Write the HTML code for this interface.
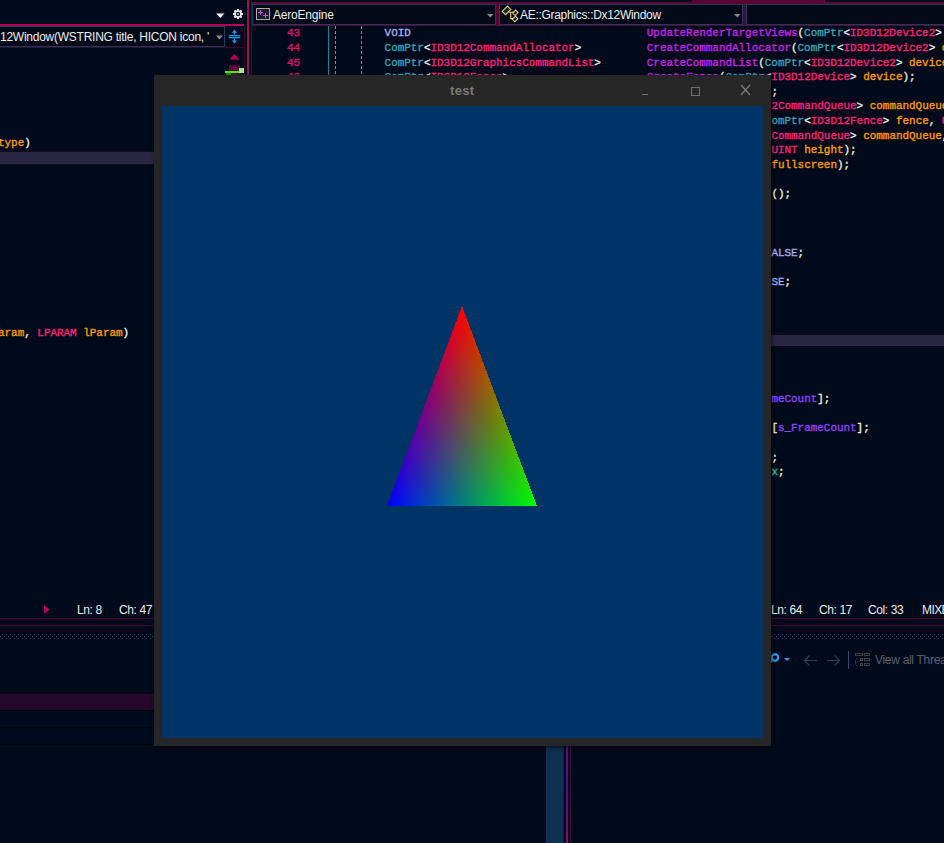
<!DOCTYPE html>
<html><head><meta charset="utf-8">
<style>
html,body{margin:0;padding:0;}
body{width:944px;height:843px;overflow:hidden;position:relative;background:#010a1b;font-family:"Liberation Sans",sans-serif;}
.a{position:absolute;}
.code{position:absolute;font-family:"Liberation Mono",monospace;font-size:10.93px;-webkit-text-stroke:0.35px currentColor;line-height:14.63px;height:14.63px;white-space:pre;color:#f2ecd6;}
.ui{position:absolute;font-family:"Liberation Sans",sans-serif;font-size:12px;white-space:pre;color:#ececec;line-height:14px;}
.fn{color:#c81ee6}.ty{color:#ff1f72}.cp{color:#3aa0b4}.pm{color:#ff9a00}.br{color:#e8f0f4}.kw{color:#aaaaf0}.mb{color:#9240fa}.gr{color:#20c8a0}.pu{color:#f2ecd6}
</style></head><body>

<!-- ===== LEFT PANE ===== -->
<!-- top toolbar icons -->
<svg class="a" style="left:216px;top:13px" width="9" height="6"><path d="M0 0.5H8.5L4.25 5Z" fill="#f0f0f0"/></svg>
<svg class="a" style="left:232px;top:8px" width="12" height="12" viewBox="0 0 12 12"><g fill="#f2f2f2"><circle cx="6" cy="6" r="3.8"/><rect x="5" y="1" width="2" height="10"/><rect x="1" y="5" width="10" height="2"/><rect x="5" y="1" width="2" height="10" transform="rotate(45 6 6)"/><rect x="5" y="1" width="2" height="10" transform="rotate(-45 6 6)"/></g><circle cx="6" cy="6" r="2.2" fill="#010a1b"/><circle cx="6" cy="6" r="0.9" fill="#f2f2f2"/></svg>
<!-- nav bar -->
<div class="a" style="left:0;top:24px;width:244px;height:2px;background:#b4005a"></div>
<div class="a" style="left:0;top:26px;width:224px;height:19px;border:1px solid #1b3d62;border-left:none;background:#020a18"></div>
<div class="ui" style="left:0px;top:30px;letter-spacing:-0.25px">12Window(WSTRING title, HICON icon, '</div>
<svg class="a" style="left:216px;top:35px" width="8" height="5"><path d="M0 0.5H7L3.5 4.5Z" fill="#8a8a8a"/></svg>
<div class="a" style="left:0;top:47px;width:244px;height:1px;background:#3a0a2a"></div>
<div class="a" style="left:244px;top:26px;width:1px;height:600px;background:#3a0a2a"></div>
<svg class="a" style="left:226px;top:27px" width="18" height="20" viewBox="0 0 18 20"><g stroke="#1e9cf0" stroke-width="1.2" fill="none"><path d="M2.8 8.6H14.2M2.8 10.6H14.2M8.5 5V7.6M8.5 11.6V14"/></g><path d="M5.8 5.8L8.5 2.8L11.2 5.8ZM5.8 13.4L8.5 16.4L11.2 13.4Z" fill="#1e9cf0"/></svg>
<!-- scrollbar bits -->
<svg class="a" style="left:229px;top:53px" width="11" height="7"><path d="M0.5 6.5L5.5 0.8L10.5 6.5Z" fill="#b0005e"/></svg>
<div class="a" style="left:229px;top:65px;width:11px;height:10px;background:#5a0a38"></div>
<div class="a" style="left:225px;top:71px;width:19px;height:2px;background:#44ee10"></div>
<div class="a" style="left:239px;top:68px;width:5px;height:5px;background:#a8e890"></div>
<div class="a" style="left:226px;top:73px;width:5px;height:2px;background:#1a8a10"></div>

<!-- left code -->
<div class="code" style="left:-2px;top:135.5px"><span class="pm">type</span><span class="br">)</span></div>
<div class="a" style="left:0;top:151px;width:244px;height:13px;background:#282744;border-top:1px solid #0c0c1c;border-bottom:1px solid #0c0c1c;box-sizing:border-box;height:14px"></div>
<div class="code" style="left:-2px;top:325.7px"><span class="pm">aram</span><span class="pu">, </span><span class="ty">LPARAM</span> <span class="pm">lParam</span><span class="br">)</span></div>

<!-- left status bar -->
<svg class="a" style="left:44px;top:605px" width="6" height="9"><path d="M0 0L5.5 4.5L0 9Z" fill="#c0005e"/></svg>
<div class="ui" style="left:77px;top:603px;letter-spacing:-0.4px">Ln: 8</div>
<div class="ui" style="left:119px;top:603px;letter-spacing:-0.4px">Ch: 47</div>
<div class="a" style="left:0;top:618px;width:244px;height:1px;background:#3a0830"></div>
<div class="a" style="left:0;top:625px;width:546px;height:1px;background:#3a0830"></div>

<!-- splitter -->
<div class="a" style="left:247px;top:0;width:2px;height:626px;background:#9a1048"></div>

<!-- ===== RIGHT PANE ===== -->
<div class="a" style="left:692px;top:0;width:133px;height:2px;background:#5a0532"></div>
<div class="a" style="left:251px;top:2px;width:693px;height:24px;background:#5a0532"></div>
<div class="a" style="left:251px;top:2px;width:1px;height:624px;background:#4a0a30"></div>
<div class="a" style="left:252px;top:4px;width:242px;height:19px;border:1px solid #1b3d62;background:#020a18"></div>
<div class="a" style="left:499px;top:4px;width:242px;height:19px;border:1px solid #1b3d62;background:#020a18"></div>
<div class="a" style="left:746px;top:4px;width:260px;height:19px;border:1px solid #1b3d62;background:#020a18"></div>
<!-- project icon -->
<svg class="a" style="left:256px;top:8px" width="14" height="12" viewBox="0 0 14 12"><rect x="0.5" y="0.5" width="13" height="11" fill="#161c28" stroke="#a8a8a8"/><g stroke="#d050e0" stroke-width="1" shape-rendering="crispEdges"><path d="M2 4.5H7M4.5 2V7M7 7.5H12M9.5 5V10"/></g></svg>
<div class="ui" style="left:273px;top:8px;letter-spacing:-0.2px">AeroEngine</div>
<svg class="a" style="left:487px;top:14px" width="7" height="4"><path d="M0 0H6.5L3.25 3.5Z" fill="#8a8a8a"/></svg>
<!-- class icon -->
<svg class="a" style="left:498px;top:3px" width="24" height="22" viewBox="0 0 24 22"><g fill="#22221e" stroke="#ecd080" stroke-width="1.05" stroke-linejoin="miter"><polygon points="9.5,3.1 12.8,6.4 7.6,11.7 4.2,8.5"/><polygon points="17.6,7.1 20.1,9.6 17.2,12.6 14.7,10.1"/><polygon points="17.3,13.2 19.9,15.7 16.9,18.8 14.3,16.3"/></g><path d="M10.6 9.3H15.3M12.7 9.3V15.6H15" stroke="#ecd080" stroke-width="1.1" fill="none"/></svg>
<div class="ui" style="left:520px;top:8px;letter-spacing:-0.3px">AE::Graphics::Dx12Window</div>
<svg class="a" style="left:734px;top:14px" width="7" height="4"><path d="M0 0H6.5L3.25 3.5Z" fill="#8a8a8a"/></svg>

<!-- margins -->
<div class="a" style="left:328px;top:26px;width:1px;height:600px;background:#108890"></div>
<div class="a" style="left:335px;top:26px;width:1px;height:600px;background:repeating-linear-gradient(#18b8c8 0 3px,transparent 3px 5px)"></div>
<div class="a" style="left:361px;top:26px;width:1px;height:600px;background:repeating-linear-gradient(#18b8c8 0 3px,transparent 3px 5px)"></div>

<!-- line numbers -->
<div class="code" style="left:287px;top:26.2px;color:#e0106a">43</div>
<div class="code" style="left:287px;top:40.8px;color:#e0106a">44</div>
<div class="code" style="left:287px;top:55.5px;color:#e0106a">45</div>
<div class="code" style="left:287px;top:70.1px;color:#e0106a">46</div>

<!-- right code: col0 = 384.6 -->
<div class="code" style="left:384.6px;top:26.2px"><span class="kw">VOID</span></div>
<div class="code" style="left:384.6px;top:40.8px"><span class="cp">ComPtr</span><span class="br">&lt;</span><span class="ty">ID3D12CommandAllocator</span><span class="br">&gt;</span></div>
<div class="code" style="left:384.6px;top:55.5px"><span class="cp">ComPtr</span><span class="br">&lt;</span><span class="ty">ID3D12GraphicsCommandList</span><span class="br">&gt;</span></div>
<div class="code" style="left:384.6px;top:70.1px"><span class="cp">ComPtr</span><span class="br">&lt;</span><span class="ty">ID3D12Fence</span><span class="br">&gt;</span></div>

<div class="code" style="left:646.8px;top:26.2px"><span class="fn">UpdateRenderTargetViews</span><span class="pu">(</span><span class="cp">ComPtr</span><span class="br">&lt;</span><span class="ty">ID3D12Device2</span><span class="br">&gt;</span> <span class="pm">device</span></div>
<div class="code" style="left:646.8px;top:40.8px"><span class="fn">CreateCommandAllocator</span><span class="pu">(</span><span class="cp">ComPtr</span><span class="br">&lt;</span><span class="ty">ID3D12Device2</span><span class="br">&gt;</span> <span class="pm">device</span></div>
<div class="code" style="left:646.8px;top:55.5px"><span class="fn">CreateCommandList</span><span class="pu">(</span><span class="cp">ComPtr</span><span class="br">&lt;</span><span class="ty">ID3D12Device2</span><span class="br">&gt;</span> <span class="pm">device</span></div>
<div class="code" style="left:646.8px;top:70.1px"><span class="fn">CreateFence</span><span class="pu">(</span><span class="cp">ComPtr</span><span class="br">&lt;</span><span class="ty">ID3D12Device</span><span class="br">&gt;</span> <span class="pm">device</span><span class="pu">);</span></div>

<div class="code" style="left:771.4px;top:84.7px"><span class="pu">;</span></div>
<div class="code" style="left:771.4px;top:99.4px"><span class="ty">2CommandQueue</span><span class="br">&gt;</span> <span class="pm">commandQueue</span><span class="pu">,</span></div>
<div class="code" style="left:771.4px;top:114.0px"><span class="cp">omPtr</span><span class="br">&lt;</span><span class="ty">ID3D12Fence</span><span class="br">&gt;</span> <span class="pm">fence</span><span class="pu">, </span><span class="ty">UINT</span></div>
<div class="code" style="left:771.4px;top:128.6px"><span class="ty">CommandQueue</span><span class="br">&gt;</span> <span class="pm">commandQueue</span><span class="pu">,</span></div>
<div class="code" style="left:771.4px;top:143.3px"><span class="ty">UINT</span> <span class="pm">height</span><span class="pu">);</span></div>
<div class="code" style="left:771.4px;top:157.9px"><span class="pm">fullscreen</span><span class="pu">);</span></div>
<div class="code" style="left:771.4px;top:187.2px"><span class="pu">();</span></div>
<div class="code" style="left:771.4px;top:245.7px"><span class="kw">ALSE</span><span class="pu">;</span></div>
<div class="code" style="left:771.4px;top:275.0px"><span class="kw">SE</span><span class="pu">;</span></div>
<div class="a" style="left:252px;top:333px;width:692px;height:15px;background:#282744;border-top:2px solid #0c0c1c;border-bottom:2px solid #0c0c1c;box-sizing:border-box"></div>
<div class="code" style="left:771.4px;top:392.0px"><span class="mb">meCount</span><span class="pu">];</span></div>
<div class="code" style="left:771.4px;top:421.2px"><span class="pu">[</span><span class="mb">s_FrameCount</span><span class="pu">];</span></div>
<div class="code" style="left:771.4px;top:450.5px"><span class="pu">;</span></div>
<div class="code" style="left:771.4px;top:465.1px"><span class="gr">x</span><span class="pu">;</span></div>

<!-- right status bar -->
<div class="ui" style="left:771px;top:603px;letter-spacing:-0.4px">Ln: 64</div>
<div class="ui" style="left:819px;top:603px;letter-spacing:-0.4px">Ch: 17</div>
<div class="ui" style="left:868px;top:603px;letter-spacing:-0.4px">Col: 33</div>
<div class="a" style="left:912px;top:601px;width:40px;height:16px;border:1px solid #140812;box-sizing:border-box"></div>
<div class="ui" style="left:922px;top:603px;letter-spacing:-0.6px">MIXED</div>
<div class="a" style="left:252px;top:618px;width:692px;height:1px;background:#3a0830"></div>
<div class="a" style="left:570px;top:625px;width:374px;height:1px;background:#3a0830"></div>

<!-- dotted grips -->
<svg class="a" style="left:0;top:634px" width="944" height="5"><defs><pattern id="dots" width="4" height="4" patternUnits="userSpaceOnUse"><rect x="2" y="0" width="1" height="1" fill="#2c4262"/><rect x="0" y="2" width="1" height="1" fill="#2c4262"/></pattern></defs><rect x="0" y="0" width="546" height="5" fill="url(#dots)"/><rect x="570" y="0" width="374" height="5" fill="url(#dots)"/></svg>


<!-- bottom-left list -->
<div class="a" style="left:0;top:694px;width:546px;height:16px;background:#26082a"></div>
<div class="a" style="left:0;top:710px;width:546px;height:34px;background:#010b1d"></div>
<div class="a" style="left:0;top:710px;width:546px;height:1px;background:#00040e"></div>
<div class="a" style="left:0;top:727px;width:546px;height:1px;background:#00040e"></div>
<div class="a" style="left:0;top:744px;width:546px;height:1px;background:#00040e"></div>

<!-- bottom vertical splitter -->
<div class="a" style="left:546px;top:600px;width:17px;height:243px;background:#0f3050"></div>
<div class="a" style="left:563px;top:600px;width:1px;height:243px;background:#440a36"></div>
<div class="a" style="left:566px;top:600px;width:2px;height:243px;background:linear-gradient(#720a88 0%,#720a88 60%,#560890 76%,#8c0c68 100%)"></div>
<div class="a" style="left:570px;top:600px;width:1px;height:243px;background:#440a36"></div>

<!-- right toolbar -->
<svg class="a" style="left:770px;top:652px" width="24" height="12" viewBox="0 0 24 12"><circle cx="5" cy="5.6" r="3.2" stroke="#2a9ef8" stroke-width="2.1" fill="none"/><path d="M2.6 8L0 10.5" stroke="#2a9ef8" stroke-width="2"/><path d="M14 6H20L17 9Z" fill="#2a9ef8"/></svg>
<svg class="a" style="left:803px;top:654px" width="40" height="13" viewBox="0 0 40 13"><g stroke="#363e4c" stroke-width="1.1" fill="none"><path d="M14 6.5H1.5M6.5 1.5L1.5 6.5L6.5 11.5"/><path d="M24 6.5H36.5M31.5 1.5L36.5 6.5L31.5 11.5"/></g></svg>
<div class="a" style="left:848px;top:651px;width:1px;height:18px;background:#2a4a70"></div>
<svg class="a" style="left:855px;top:653px" width="16" height="15" viewBox="0 0 16 15"><g stroke="#3a3f48" stroke-width="1" fill="none"><rect x="0.5" y="0.5" width="7" height="2"/><rect x="9.5" y="0.5" width="5" height="2"/><rect x="5.5" y="5.5" width="2" height="2"/><rect x="9.5" y="5.5" width="5" height="2"/><rect x="5.5" y="10.5" width="2" height="2"/><rect x="9.5" y="10.5" width="5" height="2"/><path d="M2.5 6C1 6 0.5 7 0.5 9S1 12.5 2.5 13"/></g></svg>
<div class="ui" style="left:875px;top:653px;color:#5a6070;letter-spacing:-0.3px">View all Threads</div>

<!-- ===== DX12 WINDOW ===== -->
<div class="a" style="left:154px;top:75px;width:617px;height:671px;background:#262626;box-shadow:1px 2px 4px rgba(0,0,0,0.6)"></div>
<div class="ui" style="left:450px;top:84px;font-size:13px;font-weight:bold;letter-spacing:0.35px;color:#7a7a7a;">test</div>
<div class="a" style="left:642px;top:94px;width:6px;height:1px;background:#6e6e6e"></div>
<div class="a" style="left:691px;top:87px;width:7px;height:7px;border:1px solid #707070"></div>
<svg class="a" style="left:740px;top:84px" width="11" height="12" viewBox="0 0 11 12"><path d="M1 1L10 11M10 1L1 11" stroke="#7a7a7a" stroke-width="1.3"/></svg>
<div class="a" style="left:162px;top:106px;width:601px;height:632px;background:#003366;overflow:hidden">
<svg width="601" height="632" style="position:absolute;left:0;top:0">
<defs>
<linearGradient id="gr" gradientUnits="userSpaceOnUse" x1="300" y1="200" x2="300" y2="400"><stop offset="0" stop-color="#ff0000"/><stop offset="1" stop-color="#000000"/></linearGradient>
<linearGradient id="gb" gradientUnits="userSpaceOnUse" x1="225" y1="400" x2="356.507" y2="350.685"><stop offset="0" stop-color="#0000ff"/><stop offset="1" stop-color="#000000"/></linearGradient>
<linearGradient id="gg" gradientUnits="userSpaceOnUse" x1="375" y1="400" x2="243.493" y2="350.685"><stop offset="0" stop-color="#00ff00"/><stop offset="1" stop-color="#000000"/></linearGradient>
</defs>
<g style="isolation:isolate" shape-rendering="crispEdges">
<polygon points="300,200 225,400 375,400" fill="#000"/>
<polygon points="300,200 225,400 375,400" fill="url(#gr)" style="mix-blend-mode:screen"/>
<polygon points="300,200 225,400 375,400" fill="url(#gb)" style="mix-blend-mode:screen"/>
<polygon points="300,200 225,400 375,400" fill="url(#gg)" style="mix-blend-mode:screen"/>
</g>
</svg>
</div>

</body></html>
